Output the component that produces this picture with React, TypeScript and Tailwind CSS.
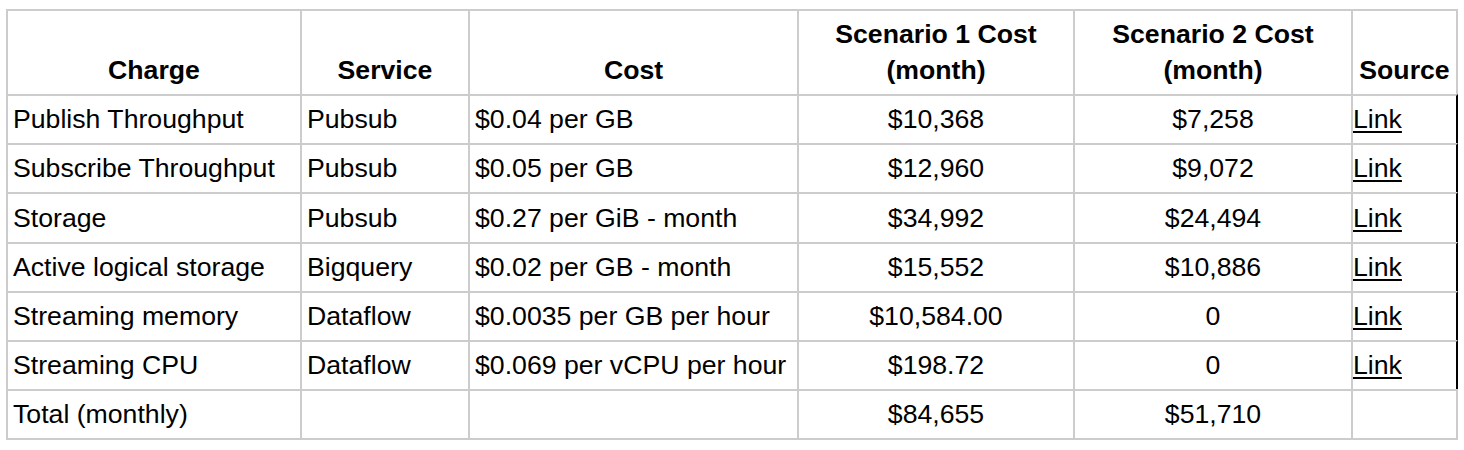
type Row = {
  charge: string;
  service: string;
  cost: string;
  s1: string;
  s2: string;
  link: boolean;
  h: string;
};

const rows: Row[] = [
  { charge: "Publish Throughput", service: "Pubsub", cost: "$0.04 per GB", s1: "$10,368", s2: "$7,258", link: true, h: "h-[49px]" },
  { charge: "Subscribe Throughput", service: "Pubsub", cost: "$0.05 per GB", s1: "$12,960", s2: "$9,072", link: true, h: "h-[49px]" },
  { charge: "Storage", service: "Pubsub", cost: "$0.27 per GiB - month", s1: "$34,992", s2: "$24,494", link: true, h: "h-[50px]" },
  { charge: "Active logical storage", service: "Bigquery", cost: "$0.02 per GB - month", s1: "$15,552", s2: "$10,886", link: true, h: "h-[49px]" },
  { charge: "Streaming memory", service: "Dataflow", cost: "$0.0035 per GB per hour", s1: "$10,584.00", s2: "0", link: true, h: "h-[49px]" },
  { charge: "Streaming CPU", service: "Dataflow", cost: "$0.069 per vCPU per hour", s1: "$198.72", s2: "0", link: true, h: "h-[49px]" },
];

const cell = "flex items-end border-l-2 border-t-2 border-[#cccccc] pb-[6px] overflow-hidden whitespace-nowrap";

const App: React.FC = () => {
  return (
    <div className="w-[1464px] h-[450px] bg-white pt-[9px] pl-[6px] text-black font-['Liberation_Sans',Arial,sans-serif] text-[26.67px] leading-[36px]">
      <div className="grid w-[1452px] grid-cols-[294px_168px_329px_276px_278px_107px]">
        {/* header */}
        <div className={`${cell} h-[85px] justify-center font-bold`}>Charge</div>
        <div className={`${cell} h-[85px] justify-center font-bold`}>Service</div>
        <div className={`${cell} h-[85px] justify-center font-bold`}>Cost</div>
        <div className={`${cell} h-[85px] justify-center text-center font-bold`}>
          <span>
            Scenario 1 Cost
            <br />
            (month)
          </span>
        </div>
        <div className={`${cell} h-[85px] justify-center text-center font-bold`}>
          <span>
            Scenario 2 Cost
            <br />
            (month)
          </span>
        </div>
        <div className={`${cell} h-[85px] justify-center border-r-2 font-bold`}>Source</div>

        {rows.map((r) => (
          <div key={r.charge} className="contents">
            <div className={`${cell} ${r.h} pl-[5px]`}>{r.charge}</div>
            <div className={`${cell} ${r.h} pl-[5px]`}>{r.service}</div>
            <div className={`${cell} ${r.h} pl-[5px]`}>{r.cost}</div>
            <div className={`${cell} ${r.h} justify-center`}>{r.s1}</div>
            <div className={`${cell} ${r.h} justify-center`}>{r.s2}</div>
            <div className={`${cell} ${r.h} border-r-2 border-r-black`}>
              {r.link && (
                <a href="#" className="underline decoration-2 underline-offset-[3px]">
                  Link
                </a>
              )}
            </div>
          </div>
        ))}

        {/* total */}
        <div className={`${cell} h-[51px] border-b-2 pl-[5px]`}>Total (monthly)</div>
        <div className={`${cell} h-[51px] border-b-2`}></div>
        <div className={`${cell} h-[51px] border-b-2`}></div>
        <div className={`${cell} h-[51px] border-b-2 justify-center`}>$84,655</div>
        <div className={`${cell} h-[51px] border-b-2 justify-center`}>$51,710</div>
        <div className={`${cell} h-[51px] border-b-2 border-r-2`}></div>
      </div>
    </div>
  );
};

export default App;
